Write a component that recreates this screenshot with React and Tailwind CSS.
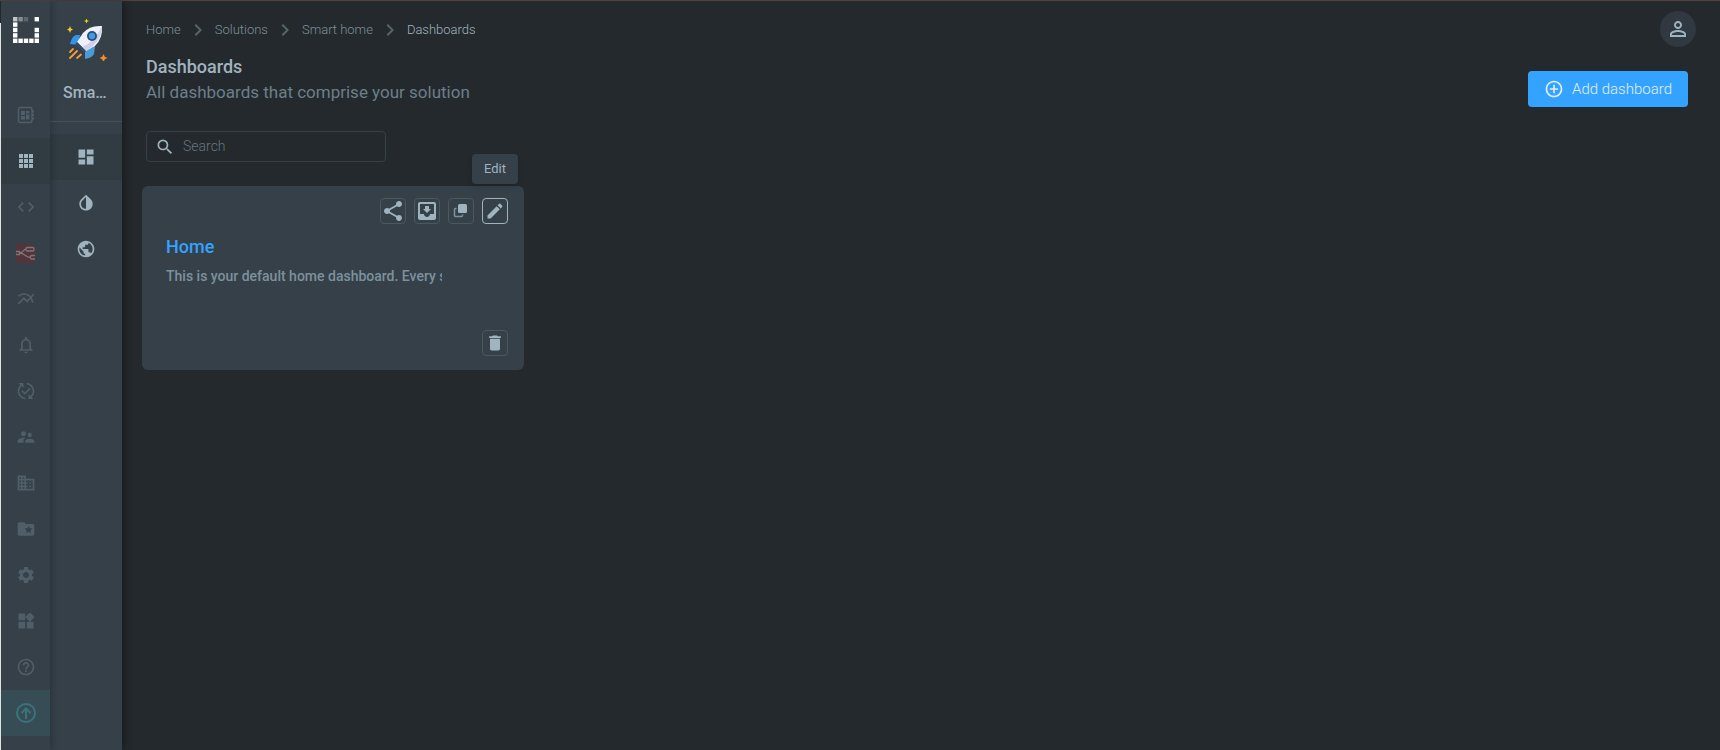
import React from "react";
import {
  MdAddCircleOutline,
  MdChevronRight,
  MdCode,
  MdDashboard,
  MdDelete,
  MdDomain,
  MdEdit,
  MdFolderSpecial,
  MdHelpOutline,
  MdInvertColors,
  MdMoveToInbox,
  MdMultilineChart,
  MdOutlineNotifications,
  MdPersonOutline,
  MdPublic,
  MdPublishedWithChanges,
  MdSearch,
  MdSettings,
  MdShare,
  MdSupervisorAccount,
  MdWidgets,
} from "react-icons/md";

const GridIcon = ({ size }) => (
  <svg width={size} height={size} viewBox="0 0 20 20" fill="currentColor" aria-hidden="true">
    {[3, 8, 13].map((y) =>
      [3, 8, 13].map((x) => <rect key={`${x}-${y}`} x={x} y={y} width="4" height="4" />)
    )}
  </svg>
);

const BoardIcon = ({ size }) => (
  <svg width={size} height={size} viewBox="0 0 20 20" fill="currentColor" aria-hidden="true">
    <rect x="2.500" y="2.500" width="13.500" height="15" rx="2" fill="none" stroke="currentColor" strokeWidth="1.400" />
    <path d="M5 6h4v4H5zM5 11h4v3.500H5zM10 6h3.500v2.500H10zM10 9.500h3.500v5H10zM16 5.500h2v2h-2zM16 9h2v2h-2zM16 12.500h2v2h-2z" />
  </svg>
);

const FlowIcon = () => (
  <svg width="19" height="19" viewBox="0 0 19 19" fill="none" aria-hidden="true">
    <rect width="19" height="19" rx="1" fill="#54333a" />
    <g stroke="#7c7679" strokeWidth="1.3">
      <path d="M0 7.500h3.500v3H0M3.500 9C7.500 9 7 5.500 10 5.200M3.500 9C9 9 9 13.500 14.500 13.500" />
      <rect x="10" y="3.500" width="8" height="3.500" rx="1.200" />
      <path d="M19 11.500h-3.500q-1 0-1 1v1.500q0 1 1 1H19" />
    </g>
  </svg>
);

const UpgradeIcon = () => (
  <svg width="22" height="22" viewBox="0 0 22 22" fill="none" stroke="currentColor" strokeWidth="2" aria-hidden="true">
    <circle cx="11" cy="11" r="9" />
    <path d="M11 17V7M6.500 11 11 6.500 15.500 11" />
  </svg>
);

const DuplicateIcon = ({ size }) => (
  <svg width={size} height={size} viewBox="0 0 20 20" aria-hidden="true">
    <path d="M5.500 7.500h-1a1 1 0 0 0-1 1v6a1 1 0 0 0 1 1h6a1 1 0 0 0 1-1v-1" fill="none" stroke="#7d919c" strokeWidth="1.500" />
    <rect x="7" y="3" width="9" height="9" rx="1.500" fill="currentColor" />
  </svg>
);

const Logo = () => {
  const cells = [
    [0, 0, 0.7], [1, 0, 0.4], [2, 0, 0.2], [4, 0, 1],
    [0, 1, 1], [0, 2, 1], [4, 2, 1], [0, 3, 1], [4, 3, 1],
    [0, 4, 1], [1, 4, 1], [2, 4, 1], [3, 4, 1], [4, 4, 1],
  ];
  return (
    <svg width="26" height="26" viewBox="0 0 26 26" fill="#fff" aria-hidden="true">
      {cells.map(([x, y, o]) => (
        <rect key={`${x}-${y}`} x={x * 5.4} y={y * 5.4} width="4.400" height="4.400" opacity={o} />
      ))}
    </svg>
  );
};

const Rocket = () => (
  <svg width="44" height="42" viewBox="-4 0 44 42" aria-hidden="true">
    <path d="M12 16H8Q4 17 2 25l8 1z" fill="#2f95ee" />
    <path d="M17 32v8q7-1 9-5l1-8z" fill="#4a9ad4" />
    <path d="M34 7Q22 6 15 14L9 23 18 32 27 27Q35 19 34 7z" fill="#eff0fa" />
    <path d="M34 7Q34 18 25 27L18 32 14 28Q27 23 34 7z" fill="#cdcfec" />
    <path d="M9 23 18 32 16 34 7 26z" fill="#34495e" />
    <circle cx="24" cy="17" r="5" fill="#2b4c6f" />
    <circle cx="24" cy="17" r="3.200" fill="#3d9bea" />
    <g stroke="#f79d38" strokeWidth="1.800" strokeLinecap="round">
      <path d="M5 30 2 33M9 32 2 39M13 35.500 9 39" />
    </g>
    <path d="M2 7l1 2.500 2 1-2 1L2 14l-1-2.500-2-1 2-1zM18.500-.5l.7 1.800 1.800.7-1.800.7-.7 1.800-.7-1.800L16 2l1.800-.7z" fill="#fbc91c" />
    <path d="M35.500 35l1.300 2.700 2.700 1.300-2.700 1.300-1.300 2.700-1.300-2.700-2.700-1.300 2.700-1.300z" fill="#fb8c1e" />
  </svg>
);

const mainNav = [
  { label: "Devices", icon: BoardIcon },
  { label: "Solutions", icon: GridIcon, active: true },
  { label: "Code", icon: MdCode },
  { label: "Flows", icon: FlowIcon },
  { label: "Analytics", icon: MdMultilineChart },
  { label: "Notifications", icon: MdOutlineNotifications },
  { label: "Updates", icon: MdPublishedWithChanges },
  { label: "Users", icon: MdSupervisorAccount },
  { label: "Organization", icon: MdDomain },
  { label: "Files", icon: MdFolderSpecial },
  { label: "Settings", icon: MdSettings },
  { label: "Widgets", icon: MdWidgets },
  { label: "Help", icon: MdHelpOutline },
];

const solutionNav = [
  { label: "Dashboards", icon: MdDashboard, active: true },
  { label: "Theme", icon: MdInvertColors },
  { label: "Domains", icon: MdPublic },
];

const crumbs = ["Home", "Solutions", "Smart home"];

const NavLink = ({ item }) => {
  const Icon = item.icon;
  return (
    <a
      href="#"
      aria-label={item.label}
      className={`flex h-[46px] items-center justify-center ${item.active ? "bg-[#313b42]" : ""}`}
    >
      <Icon size={20} />
    </a>
  );
};

const CardButton = ({ label, highlighted, children }) => (
  <button
    type="button"
    aria-label={label}
    className={`flex size-[26px] items-center justify-center rounded border text-[#a0b4bf] ${
      highlighted ? "border-[#a0b4bf]" : "border-[#4a5860]"
    }`}
  >
    {children}
  </button>
);

const DashboardCard = () => (
  <article className="flex h-[184px] w-[382px] flex-col rounded-md bg-[#364049] px-4 pt-3 pb-[14px]">
    <div className="flex justify-end gap-2">
      <CardButton label="Share"><MdShare size={24} /></CardButton>
      <CardButton label="Export"><MdMoveToInbox size={24} /></CardButton>
      <CardButton label="Duplicate"><DuplicateIcon size={20} /></CardButton>
      <div className="relative">
        <CardButton label="Edit" highlighted><MdEdit size={20} /></CardButton>
        <div
          role="tooltip"
          className="absolute bottom-full left-1/2 mb-[14px] -translate-x-1/2 rounded bg-[#364049] px-3 py-2 text-[13px] leading-[14px] text-[#a0b4bf] shadow-md"
        >
          Edit
        </div>
      </div>
    </div>
    <div className="flex flex-1 flex-col px-2 pt-[9px]">
      <h2 className="text-[18px] leading-7 font-medium text-[#33a3ff]">
        <a href="#">Home</a>
      </h2>
      <p className="mt-[5px] w-[276px] overflow-hidden text-[14px] leading-5 font-medium whitespace-nowrap text-[#7d919c]">
        This is your default home dashboard. Every s
      </p>
    </div>
    <div className="flex justify-end">
      <CardButton label="Delete"><MdDelete size={20} /></CardButton>
    </div>
  </article>
);

export default function App() {
  return (
    <div className="flex min-h-screen border-t border-t-[#54423f] bg-[#24292d] font-[Roboto,sans-serif] text-[#a0b4bf]">
      <div className="mt-[22px] w-px shrink-0 bg-[#e8eaec]" />
      <nav className="z-20 flex w-[49px] shrink-0 flex-col bg-[#364049] text-[#4f5e68] shadow-[2px_0_6px_rgba(0,0,0,0.2)]">
        <a href="#" aria-label="Home" className="flex h-[91px] items-start justify-center pt-4">
          <Logo />
        </a>
        {mainNav.map((item) => (
          <div key={item.label} className={item.active ? "text-[#a0b4bf]" : ""}>
            <NavLink item={item} />
          </div>
        ))}
        <a
          href="#"
          aria-label="Upgrade"
          className="flex h-[46px] items-center justify-center bg-[#374d56] text-[#3c727a]"
        >
          <UpgradeIcon />
        </a>
      </nav>

      <aside className="z-10 flex w-[72px] shrink-0 flex-col bg-[#364049] shadow-[2px_0_8px_rgba(0,0,0,0.35)]">
        <div className="flex h-[121px] flex-col items-center border-b border-[#46525b] px-[13px] pt-[18px]">
          <Rocket />
          <span className="mt-5 w-full truncate text-[16px] leading-6 font-medium">Smart home</span>
        </div>
        <div className="pt-3">
          {solutionNav.map((item) => (
            <NavLink key={item.label} item={item} />
          ))}
        </div>
      </aside>

      <div className="min-w-0 flex-1">
        <header className="flex h-[53px] items-start justify-between pt-[10px] pr-6 pl-6">
          <nav aria-label="Breadcrumb" className="flex h-[38px] items-center text-[13px] font-light">
            {crumbs.map((crumb) => (
              <React.Fragment key={crumb}>
                <a href="#" className="text-[#7d8f98]">{crumb}</a>
                <MdChevronRight size={24} className="mx-[5px] text-[#56646c]" />
              </React.Fragment>
            ))}
            <span aria-current="page">Dashboards</span>
          </nav>
          <button
            type="button"
            aria-label="Account"
            className="flex size-9 items-center justify-center rounded-full bg-[#303842]"
          >
            <MdPersonOutline size={24} />
          </button>
        </header>

        <main>
          <div className="flex items-start justify-between pr-8 pl-6">
            <div>
              <h1 className="text-[18px] leading-[26px] font-medium">Dashboards</h1>
              <p className="text-[17px] leading-6 text-[#6c7f8a]">
                All dashboards that comprise your solution
              </p>
            </div>
            <button
              type="button"
              className="mt-[17px] flex h-9 items-center gap-2 rounded bg-[#33a3ff] px-4 text-[15px] font-light text-[#e2eef6]"
            >
              <MdAddCircleOutline size={20} />
              Add dashboard
            </button>
          </div>

          <label className="mt-6 ml-6 flex h-[31px] w-[240px] items-center rounded border border-[#364049] px-2">
            <MdSearch size={20} className="shrink-0" />
            <input
              type="text"
              aria-label="Search"
              placeholder="Search"
              className="ml-2 w-full min-w-0 bg-transparent text-[14px] font-light outline-none placeholder:text-[#66757d]"
            />
          </label>

          <section className="mt-6 ml-5">
            <DashboardCard />
          </section>
        </main>
      </div>
    </div>
  );
}
